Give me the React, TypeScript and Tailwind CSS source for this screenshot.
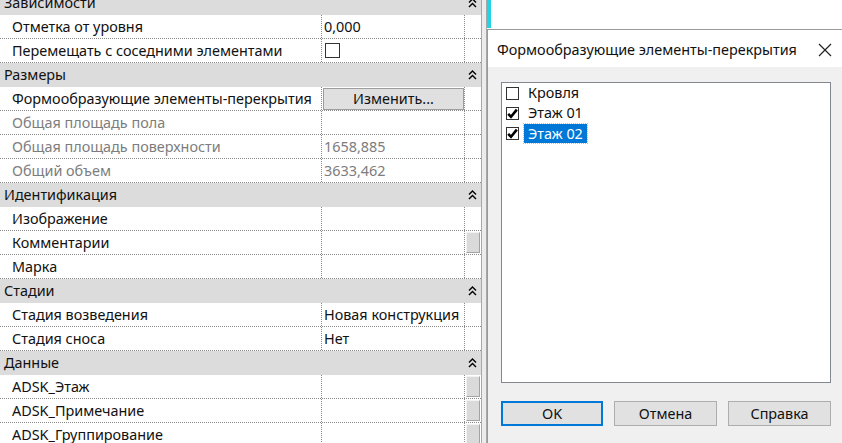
import React from "react";

type Row = {
  label: string;
  value?: string;
  kind?: "text" | "check" | "button";
  muted?: boolean;
  side?: boolean;
};

type Group = { title: string; rows: Row[] };

const groups: Group[] = [
  {
    title: "Зависимости",
    rows: [
      { label: "Отметка от уровня", value: "0,000" },
      { label: "Перемещать с соседними элементами", kind: "check" },
    ],
  },
  {
    title: "Размеры",
    rows: [
      { label: "Формообразующие элементы-перекрытия", kind: "button", value: "Изменить..." },
      { label: "Общая площадь пола", muted: true },
      { label: "Общая площадь поверхности", value: "1658,885", muted: true },
      { label: "Общий объем", value: "3633,462", muted: true },
    ],
  },
  {
    title: "Идентификация",
    rows: [
      { label: "Изображение" },
      { label: "Комментарии", side: true },
      { label: "Марка" },
    ],
  },
  {
    title: "Стадии",
    rows: [
      { label: "Стадия возведения", value: "Новая конструкция" },
      { label: "Стадия сноса", value: "Нет" },
    ],
  },
  {
    title: "Данные",
    rows: [
      { label: "ADSK_Этаж", side: true },
      { label: "ADSK_Примечание", side: true },
      { label: "ADSK_Группирование", side: true },
    ],
  },
];

const floors = [
  { name: "Кровля", checked: false, selected: false },
  { name: "Этаж 01", checked: true, selected: false },
  { name: "Этаж 02", checked: true, selected: true },
];

function Collapse() {
  return (
    <svg width="9" height="10" viewBox="0 0 9 10" className="text-black">
      <path d="M1 4.5 L4.5 1 L8 4.5" fill="none" stroke="currentColor" strokeWidth="1.4" />
      <path d="M1 9 L4.5 5.5 L8 9" fill="none" stroke="currentColor" strokeWidth="1.4" />
    </svg>
  );
}

function Tick() {
  return (
    <svg width="11" height="11" viewBox="0 0 11 11">
      <path d="M1.2 5.8 L4 8.8 L9.8 1.6" fill="none" stroke="#000" strokeWidth="2.6" />
    </svg>
  );
}

function PropertyRow({ row }: { row: Row }) {
  const tone = row.muted ? "text-[#7d7d7d]" : "text-[#111]";
  return (
    <div className="flex h-[24px] border-b border-dotted border-[#8a8a8a] bg-white">
      <div className={`w-[321px] shrink-0 pl-[12px] leading-[23px] whitespace-nowrap overflow-hidden ${tone}`}>
        {row.label}
      </div>
      <div className="w-[144px] shrink-0 border-l border-r border-dotted border-[#8a8a8a] flex items-center">
        {row.kind === "check" && (
          <div className="ml-[3px] w-[15px] h-[15px] border border-[#333] bg-white" />
        )}
        {row.kind === "button" && (
          <div className="w-full h-[22px] ml-[1px] bg-[#e0e0e0] border border-[#9d9d9d] flex items-center justify-center text-[#111]">
            {row.value}
          </div>
        )}
        {row.kind !== "check" && row.kind !== "button" && row.value && (
          <span className={`pl-[2px] whitespace-nowrap ${tone}`}>{row.value}</span>
        )}
      </div>
      <div className="flex-1 flex items-center justify-center">
        {row.side && (
          <div className="w-[14px] h-[21px] bg-[#dadada] border border-[#f2f2f2] border-r-[#a3a3a3] border-b-[#a3a3a3]" />
        )}
      </div>
    </div>
  );
}

export default function App() {
  return (
    <div
      className="flex w-[842px] h-[443px] overflow-hidden bg-white text-[14.4px]"
      style={{ fontFamily: '"Noto Sans", "Open Sans", sans-serif' }}
    >
      <div className="w-[481px] shrink-0 flex flex-col -mt-[9px]">
        {groups.map((g) => (
          <div key={g.title}>
            <div className="flex h-[24px] items-center justify-between bg-[#dcdcdc] pl-[4px] pr-[4px] text-[#111]">
              <span>{g.title}</span>
              <Collapse />
            </div>
            {g.rows.map((r) => (
              <PropertyRow key={r.label} row={r} />
            ))}
          </div>
        ))}
      </div>

      <div className="w-[6px] shrink-0 bg-[#ececec] border-l border-r border-[#a8a8a8]" />

      <div className="flex-1 flex flex-col">
        <div className="h-[29px] shrink-0 bg-white">
          <div className="w-[4px] h-[28px] bg-[#22d3e6]" />
        </div>

        <div className="flex-1 flex flex-col border-l border-t border-[#9a9a9a] bg-[#f0f0f0]">
          <div className="h-[37px] shrink-0 bg-white flex items-center justify-between pl-[9px] pr-[12px] pt-[2px] text-[#111]">
            <span className="whitespace-nowrap">Формообразующие элементы-перекрытия</span>
            <svg width="14" height="14" viewBox="0 0 14 14">
              <path d="M1 1 L13 13 M13 1 L1 13" stroke="#222" strokeWidth="1.2" />
            </svg>
          </div>

          <div className="flex-1 flex flex-col px-[13px] pt-[15px]">
            <div className="h-[301px] bg-white border border-[#828790] pl-[4px]">
              {floors.map((f) => (
                <div key={f.name} className="flex items-center h-[20px]">
                  <div className="w-[13px] h-[13px] border border-[#333] bg-white flex items-center justify-center">
                    {f.checked && <Tick />}
                  </div>
                  <span
                    className={
                      f.selected
                        ? "ml-[5px] px-[4px] leading-[19px] bg-[#0078d7] text-white outline outline-1 outline-dotted outline-[#99c9ef]"
                        : "ml-[9px] text-[#111]"
                    }
                  >
                    {f.name}
                  </span>
                </div>
              ))}
            </div>

            <div className="flex gap-[11px] mt-[18px]">
              <button className="w-[102px] h-[25px] bg-[#e1e1e1] border-2 border-[#0078d7] text-[#111]">OK</button>
              <button className="w-[103px] h-[25px] bg-[#e1e1e1] border border-[#adadad] text-[#111]">Отмена</button>
              <button className="w-[103px] h-[25px] bg-[#e1e1e1] border border-[#adadad] text-[#111]">Справка</button>
            </div>
          </div>
        </div>
      </div>
    </div>
  );
}
